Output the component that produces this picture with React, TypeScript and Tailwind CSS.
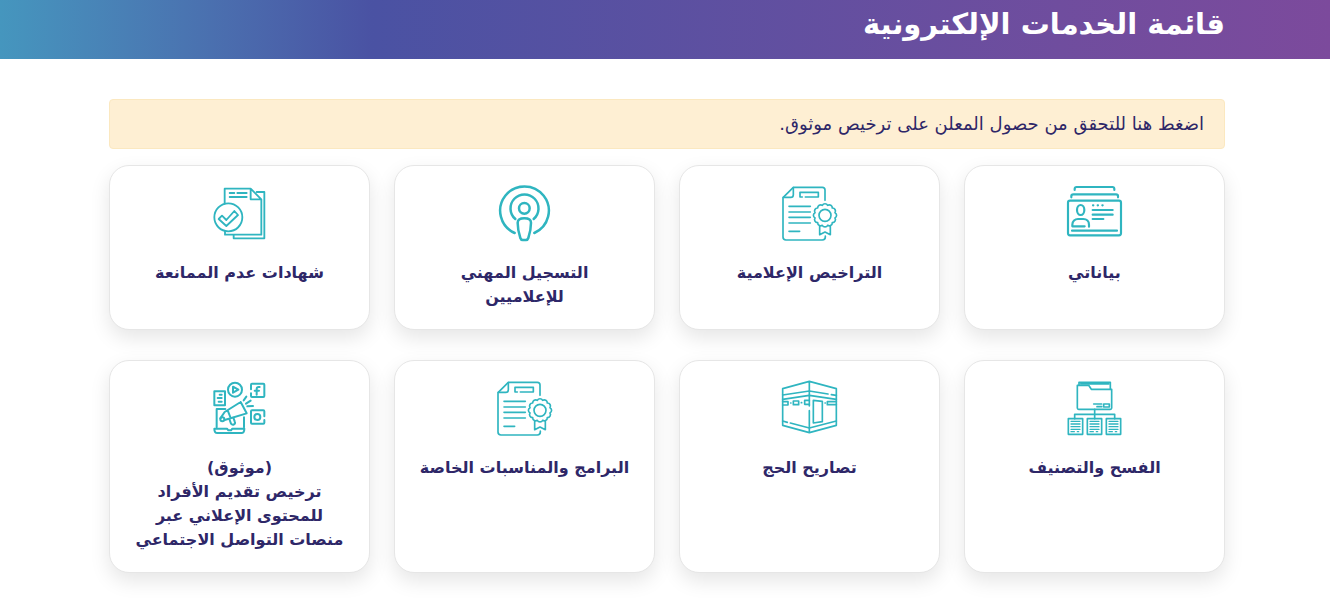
import React from 'react';

const point = (i: number) => {
  const angle = (i * Math.PI) / 6 + Math.PI / 12;
  return `${(165 + 31 * Math.cos(angle)).toFixed(1)} ${(121 + 31 * Math.sin(angle)).toFixed(1)}`;
};

// Scalloped edge of the licence seal, 12 bumps
const sealPath =
  `M${point(0)}` + Array.from({ length: 12 }, (_, i) => `A9 9 0 0 1 ${point(i + 1)}`).join('') + 'Z';

type IconProps = { children: React.ReactNode; viewBox?: string; stroke?: number };

const Icon = ({ children, viewBox = '36 33 165 165', stroke = 5 }: IconProps) => (
  <svg
    viewBox={viewBox}
    className="mx-auto mb-5 size-[55px] overflow-visible text-[#2fb5c0]"
    fill="none"
    stroke="currentColor"
    strokeWidth={stroke}
    strokeLinecap="round"
    strokeLinejoin="round"
    aria-hidden="true"
  >
    {children}
  </svg>
);

const ProfileIcon = () => (
  <Icon viewBox="39 33 165 165" stroke={6.5}>
    <path d="M62 45v-3q0-6 6-6h107q6 0 6 6v3M52 67v-4q0-5 6-5h128q6 0 6 5v4" />
    <rect x="42" y="77" width="159" height="104" rx="6" />
    <ellipse cx="80" cy="105" rx="11" ry="15" />
    <path d="M92 154H55v-5c0-10 8-17 17-17h16c10 0 17 7 17 17v6" />
    <path d="M116 105h60M116 119h60M116 132h32M54 167h135" />
    <path d="M117 91h1M131 91h1M145 91h1" />
  </Icon>
);

const LicenseIcon = () => (
  <Icon>
    <path d="M165 76V45q0-8-8-8H70L39 68v118q0 9 9 9h109q9 0 9-9v-3" />
    <path d="M70 38v21q0 8-8 8H40" />
    <path d="M97 66h-7V52h55v14h-39" />
    <path d="M57 94h64M57 111h64M57 127h64M57 144h64M57 169h32" />
    <path d={sealPath} />
    <circle cx="165" cy="121" r="18" />
    <path d="M149 152v27l16-8 16 8v-27" />
  </Icon>
);

const PodcastIcon = () => (
  <Icon stroke={7.5}>
    <path d="M89 174A73 73 0 1 1 148 174" />
    <path d="M91 132A42 42 0 1 1 146 132" />
    <circle cx="118" cy="100" r="16" />
    <path d="M118 130c12 0 20 4 20 13 0 18-4 34-8 46q-2 6-7 6h-10q-5 0-7-6c-4-12-8-28-8-46 0-9 8-13 20-13z" />
  </Icon>
);

const CertificateIcon = () => (
  <Icon stroke={5.5}>
    <path d="M74 86V41h78l32 32v106H75v-10M152 41v32h32" />
    <path d="M170 51h23v139h-92v-10" />
    <path d="M89 54h14M112 54h28M89 66h51" />
    <circle cx="85" cy="127" r="42" />
    <path d="M56 132l10-10 13 13 24-27 11 12-35 33z" />
  </Icon>
);

const FolderIcon = () => (
  <Icon viewBox="39 33 165 165">
    <path d="M75 45v-8h94v21M80 42h84" />
    <path d="M70 46h34l8 12h61v56q0 4-4 4H74q-4 0-4-4z" />
    <path d="M119 102h24M129 110h14M149 102h17v9h-17z" />
    <path d="M122 118v28M62 146v-13h120v13" />
    {[43, 100, 157].map((x) => (
      <g key={x}>
        <rect x={x} y="146" width="43" height="47" />
        <path strokeWidth="4" d={`M${x + 8} 154h27M${x + 8} 162h27M${x + 8} 170h27M${x + 8} 178h27M${x + 8} 185h10M${x + 27} 185h4`} />
      </g>
    ))}
  </Icon>
);

const KaabaIcon = () => (
  <Icon>
    <path d="M118 108V34L38 56v110l80 22 81-22V56l-81-22M118 122v66" />
    <path d="M38 75l80-12 56 9M184 74l15 2M38 88l80-12 81 12" />
    <path d="M38 95h16v10H38M70 93h16v11H70zM118 91h-14v12h14M199 95h-27v9h27" />
    <path d="M62 99h1M94 98h1M165 99h1" />
    <path d="M130 91l27 3v61l-27 4z" />
    <path d="M38 153l14 4M61 159l57 15 81-21" />
  </Icon>
);

const MarketingIcon = () => (
  <Icon stroke={6}>
    <path d="M43 64h32v42H43zM59 74h6M53 84h12M56 95h9" />
    <circle cx="105" cy="59" r="21" />
    <path d="M99 50l16 9-16 9z" />
    <path d="M153 58V44q0-3 3-3h34q3 0 3 3v34q0 3-3 3h-34q-3 0-3-3v-8M179 51h-3q-6 0-6 6v17M164 62h13" />
    <path d="M193 139v-15q0-3-3-3h-34q-3 0-3 3v34q0 3 3 3h34q3 0 3-3v-8" />
    <circle cx="172" cy="141" r="9" />
    <path d="M131 91l8-11M138 101l14-9M142 109l17-1" />
    <path d="M50 172v-55h26M132 142v30" />
    <path d="M43 176h38l4 5h8l4-5h36q0 13-9 13H52q-9 0-9-13z" />
    <path d="M122 96l18 34-66 20M122 96L74 126l-13 19M83 121l9 23" />
    <circle cx="67" cy="148" r="6" />
    <path d="M88 147l5 14q4 5 9 2t2-9l-4-11" />
  </Icon>
);

const services = [
  { title: 'بياناتي', icon: ProfileIcon },
  { title: 'التراخيص الإعلامية', icon: LicenseIcon },
  { title: 'التسجيل المهني\nللإعلاميين', icon: PodcastIcon },
  { title: 'شهادات عدم الممانعة', icon: CertificateIcon },
  { title: 'الفسح والتصنيف', icon: FolderIcon },
  { title: 'تصاريح الحج', icon: KaabaIcon },
  { title: 'البرامج والمناسبات الخاصة', icon: LicenseIcon },
  {
    title: '(موثوق)\nترخيص تقديم الأفراد\nللمحتوى الإعلاني عبر\nمنصات التواصل الاجتماعي',
    icon: MarketingIcon,
  },
];

const App = () => {
  return (
    <div dir="rtl" className="min-h-screen bg-white pb-7 font-['DejaVu_Sans',sans-serif] text-[#2e2768]">
      <header className="bg-linear-to-r from-[#4596be] via-[#4a52a3] via-28% to-[#7c4a9c] pl-1">
        <div className="mx-auto max-w-[1116px] pt-1 pb-[15px]">
          <h1 className="text-[29px] leading-10 font-bold text-white">قائمة الخدمات الإلكترونية</h1>
        </div>
      </header>

      <main className="pt-10 pl-1">
        <div className="mx-auto max-w-[1116px]">
          <a
            href="#verify"
            className="mb-4 block rounded border border-[#fbe8c0] bg-[#feefd3] px-5 py-3 text-lg leading-6"
          >
            اضغط هنا للتحقق من حصول المعلن على ترخيص موثوق.
          </a>

          <div className="grid grid-cols-2 gap-x-6 gap-y-[30px] md:grid-cols-4">
            {services.map(({ title, icon: ServiceIcon }) => (
              <a
                key={title}
                href="#service"
                className="block rounded-[20px] border border-[#e6e6e6] bg-white py-5 text-center shadow-[0_8px_20px_rgba(0,0,0,0.1)]"
              >
                <ServiceIcon />
                <h2 className="text-base leading-6 font-bold whitespace-pre-line">{title}</h2>
              </a>
            ))}
          </div>
        </div>
      </main>
    </div>
  );
};

export default App;
